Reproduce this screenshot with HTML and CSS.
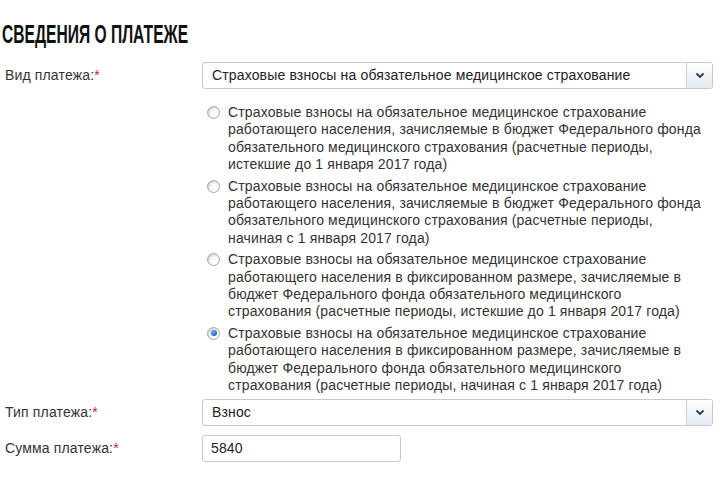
FILE: index.html
```html
<!DOCTYPE html>
<html lang="ru">
<head>
<meta charset="utf-8">
<title>Сведения о платеже</title>
<link rel="stylesheet" href="styles.css">
</head>
<body>
<div class="page">
  <h2 class="title"><span class="title-text">СВЕДЕНИЯ О ПЛАТЕЖЕ</span></h2>

  <div class="row">
    <div class="label">Вид платежа:<span class="req">*</span></div>
    <div class="field">
      <div class="select">
        <div class="select-value">Страховые взносы на обязательное медицинское страхование</div>
        <div class="select-arrow">
          <svg width="10" height="7" viewBox="0 0 10 7"><path d="M1.5 1.5 L5 5 L8.5 1.5" fill="none" stroke="#1f3b57" stroke-width="1.8"/></svg>
        </div>
      </div>
      <div class="options">
        <div class="option">
          <span class="radio"></span>
          <span class="option-text">Страховые взносы на обязательное медицинское страхование работающего населения, зачисляемые в бюджет Федерального фонда обязательного медицинского страхования (расчетные периоды, истекшие до 1 января 2017 года)</span>
        </div>
        <div class="option">
          <span class="radio"></span>
          <span class="option-text">Страховые взносы на обязательное медицинское страхование работающего населения, зачисляемые в бюджет Федерального фонда обязательного медицинского страхования (расчетные периоды, начиная с 1 января 2017 года)</span>
        </div>
        <div class="option">
          <span class="radio"></span>
          <span class="option-text">Страховые взносы на обязательное медицинское страхование работающего населения в фиксированном размере, зачисляемые в бюджет Федерального фонда обязательного медицинского страхования (расчетные периоды, истекшие до 1 января 2017 года)</span>
        </div>
        <div class="option">
          <span class="radio checked"></span>
          <span class="option-text">Страховые взносы на обязательное медицинское страхование работающего населения в фиксированном размере, зачисляемые в бюджет Федерального фонда обязательного медицинского страхования (расчетные периоды, начиная с 1 января 2017 года)</span>
        </div>
      </div>
    </div>
  </div>

  <div class="row row-type">
    <div class="label">Тип платежа:<span class="req">*</span></div>
    <div class="field">
      <div class="select">
        <div class="select-value">Взнос</div>
        <div class="select-arrow">
          <svg width="10" height="7" viewBox="0 0 10 7"><path d="M1.5 1.5 L5 5 L8.5 1.5" fill="none" stroke="#1f3b57" stroke-width="1.8"/></svg>
        </div>
      </div>
    </div>
  </div>

  <div class="row row-sum">
    <div class="label">Сумма платежа:<span class="req">*</span></div>
    <div class="field">
      <div class="input">5840</div>
    </div>
  </div>
</div>
</body>
</html>
```

FILE: styles.css
```css
html, body {
  margin: 0;
  padding: 0;
  background: #ffffff;
}

body {
  font-family: "Liberation Sans", Arial, sans-serif;
  font-size: 14px;
  letter-spacing: 0.15px;
  color: #333333;
}

.page {
  width: 713px;
  padding-top: 19px;
}

.title {
  margin: 0 0 13px 0;
  padding-left: 2px;
  font-size: 26px;
  line-height: 30px;
  font-weight: bold;
  letter-spacing: 0;
  color: #111111;
  white-space: nowrap;
}

.title-text {
  display: inline-block;
  transform: scaleX(0.6);
  transform-origin: left center;
}

.row {
  display: flex;
  align-items: flex-start;
}

.label {
  width: 197px;
  padding-left: 5px;
  line-height: 27px;
  flex: none;
  color: #333333;
}

.req {
  color: #c0282d;
}

.field {
  flex: 1;
}

.select {
  display: flex;
  height: 25px;
  border: 1px solid #c9c9c9;
  border-radius: 3px;
  background: #ffffff;
  overflow: hidden;
}

.select-value {
  flex: 1;
  padding-left: 9px;
  line-height: 25px;
  color: #222222;
  white-space: nowrap;
}

.select-arrow {
  width: 25px;
  flex: none;
  border-left: 1px solid #d0d0d0;
  background: linear-gradient(#ffffff, #e3eaf2);
  display: flex;
  align-items: center;
  justify-content: center;
}

.options {
  margin-top: 15px;
  display: flex;
  flex-direction: column;
  gap: 4px;
}

.option {
  display: flex;
  align-items: flex-start;
  padding-left: 5px;
}

.radio {
  width: 11px;
  height: 11px;
  flex: none;
  margin-top: 2px;
  margin-right: 8px;
  border: 1px solid #a9a9a9;
  border-radius: 50%;
  background: radial-gradient(circle at 65% 65%, #ffffff 0%, #f4f4f4 55%, #dcdcdc 100%);
  box-shadow: inset 1px 1px 1px rgba(0, 0, 0, 0.12);
  position: relative;
}

.radio.checked::after {
  content: "";
  position: absolute;
  left: 2.5px;
  top: 2.5px;
  width: 6px;
  height: 6px;
  border-radius: 50%;
  background: radial-gradient(circle at 40% 35%, #6fb0f5 0%, #1f6fd6 60%, #1554a8 100%);
}

.option-text {
  max-width: 476px;
  line-height: 17.4px;
  color: #333333;
}

.row-type {
  margin-top: 4px;
}

.row-sum {
  margin-top: 9px;
}

.input {
  width: 189px;
  height: 25px;
  padding-left: 8px;
  border: 1px solid #c9c9c9;
  border-radius: 3px;
  line-height: 25px;
  color: #222222;
}
```
